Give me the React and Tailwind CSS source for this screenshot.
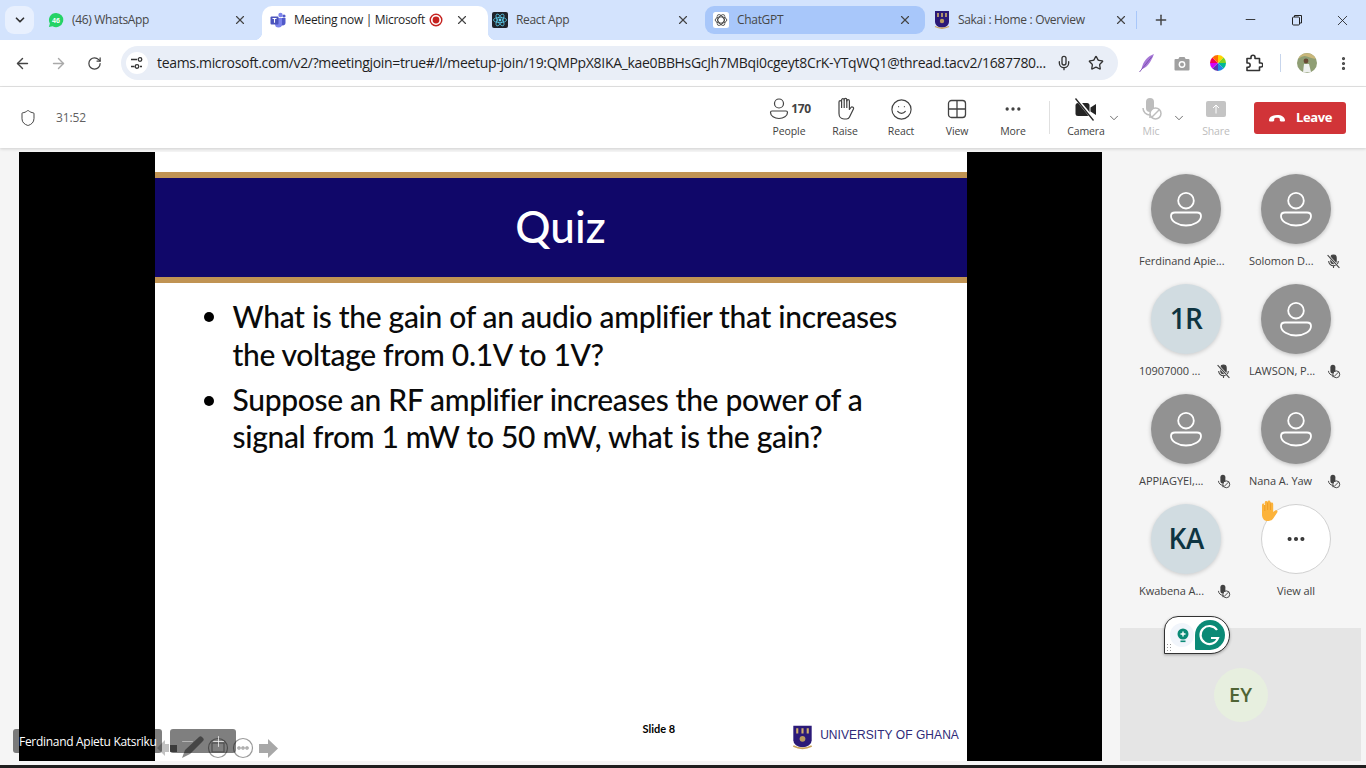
import {
  ArrowLeft, ArrowRight, RotateCw, Mic, Star, EllipsisVertical, X, Plus, Minus, ChevronDown, Shield, Smile, Ellipsis,
} from "lucide-react";

const ui = { fontFamily: '"Open Sans", "Noto Sans", sans-serif' };
const slideFont = { fontFamily: 'Lato, "Open Sans", sans-serif' };

const WhatsAppIcon = () => (
  <svg width="18" height="18" viewBox="0 0 18 18">
    <path d="M9 1a8 8 0 0 0-6.900 12L1 17l4.100-1.100A8 8 0 1 0 9 1z" fill="#25d366" />
    <text x="9" y="12" textAnchor="middle" fontSize="8" fontWeight="700" fill="#fff" fontFamily="Liberation Sans">46</text>
  </svg>
);

const TeamsIcon = () => (
  <svg width="16" height="16" viewBox="0 0 16 16">
    <circle cx="10.500" cy="3" r="2.200" fill="#7b83eb" />
    <circle cx="14" cy="4" r="1.600" fill="#5059c9" />
    <path d="M9 6h6.500v5a2.500 2.500 0 0 1-3.500 2.200A4 4 0 0 1 9 14z" fill="#5059c9" />
    <path d="M5 6h7v6a3.500 3.500 0 0 1-7 0z" fill="#7b83eb" />
    <rect x="0.500" y="4.500" width="8" height="8" rx="1" fill="#4b53bc" />
    <path d="M2.500 6.500h4M4.500 6.500v4.300" stroke="#fff" strokeWidth="1.100" />
  </svg>
);

const ReactIcon = () => (
  <svg width="16" height="16" viewBox="0 0 16 16">
    <rect width="16" height="16" rx="2" fill="#20232a" />
    <circle cx="8" cy="8" r="1.400" fill="#61dafb" />
    <g fill="none" stroke="#61dafb" strokeWidth="0.700">
      <ellipse cx="8" cy="8" rx="6.600" ry="2.600" />
      <ellipse cx="8" cy="8" rx="6.600" ry="2.600" transform="rotate(60 8 8)" />
      <ellipse cx="8" cy="8" rx="6.600" ry="2.600" transform="rotate(120 8 8)" />
    </g>
  </svg>
);

const ChatGptIcon = () => (
  <svg width="16" height="16" viewBox="0 0 16 16">
    <rect width="16" height="16" rx="2.500" fill="#fff" />
    <g fill="none" stroke="#444" strokeWidth="0.900">
      <ellipse cx="8" cy="8" rx="5.800" ry="3.100" />
      <ellipse cx="8" cy="8" rx="5.800" ry="3.100" transform="rotate(60 8 8)" />
      <ellipse cx="8" cy="8" rx="5.800" ry="3.100" transform="rotate(120 8 8)" />
    </g>
  </svg>
);

const GhanaShield = ({ w = 16, h = 18 }) => (
  <svg width={w} height={h} viewBox="0 0 16 18">
    <path d="M1 0h14v11a7 5.500 0 0 1-14 0z" fill="#2b1a78" />
    <path d="M4 2v4M8 2v4M12 2v4" stroke="#cfae6b" strokeWidth="1.600" />
    <circle cx="8" cy="10" r="2.200" fill="#b99a5f" />
    <path d="M1 15.500q7 3.500 14 0" stroke="#c9a35c" strokeWidth="1.300" fill="none" />
  </svg>
);

const RecordDot = () => (
  <svg width="14" height="14" viewBox="0 0 14 14" className="-ml-[4px] shrink-0">
    <circle cx="7" cy="7" r="5.800" fill="none" stroke="#c5221f" strokeWidth="1.400" />
    <circle cx="7" cy="7" r="3.400" fill="#c5221f" />
  </svg>
);

const Tab = ({ icon, title, width, paddingRight, active, hover, record, className = "" }) => (
  <div
    className={`relative flex h-7 shrink-0 items-center gap-[8px] pl-[8px] text-xs ${
      active ? "h-[34px] self-end rounded-t-[10px] bg-white pb-[6px] text-[#1f1f1f]" : "rounded-[9px] text-[#474747]"
    } ${hover ? "bg-[#a8c7fa]" : ""} ${className}`}
    style={{ width, paddingRight }}
  >
    {active && (
      <>
        <span className="absolute bottom-0 left-[-8px] h-[8px] w-[8px] bg-[radial-gradient(circle_at_0_0,transparent_8px,white_8.500px)]" />
        <span className="absolute bottom-0 right-[-8px] h-[8px] w-[8px] bg-[radial-gradient(circle_at_100%_0,transparent_8px,white_8.500px)]" />
      </>
    )}
    <span className="flex w-[16px] shrink-0 justify-center">{icon}</span>
    <span className="min-w-0 flex-1 whitespace-nowrap tracking-[-0.32px]">{title}</span>
    {record && <RecordDot />}
    <X size={14} strokeWidth={2} className="ml-[4px] shrink-0 text-[#444]" />
  </div>
);

const TabStrip = () => (
  <div className="flex h-10 shrink-0 items-start bg-[#d3e3fd] pl-[5px] pt-[6px]">
    <div className="flex h-7 w-[29px] shrink-0 items-center justify-center rounded-[9px] bg-[#e8f0fe]">
      <ChevronDown size={14} strokeWidth={3} className="text-[#333]" />
    </div>
    <Tab width={222} paddingRight={15} icon={<WhatsAppIcon />} title="(46) WhatsApp" className="ml-[6px]" />
    <Tab width={226} paddingRight={19} active icon={<TeamsIcon />} title="Meeting now | Microsoft" record />
    <Tab width={221} paddingRight={15} icon={<ReactIcon />} title="React App" className="-ml-[4px]" />
    <Tab width={220} paddingRight={13} hover icon={<ChatGptIcon />} title="ChatGPT" />
    <Tab width={210} paddingRight={8} icon={<GhanaShield />} title="Sakai : Home : Overview" className="ml-[1px]" />
    <div className="mt-[5px] h-[18px] w-px bg-[#a8c7fa]" />
    <Plus size={16} strokeWidth={2.200} className="ml-[16px] mt-[6px] text-[#444]" />
    <Minus size={15} strokeWidth={1.400} className="ml-[74px] mt-[6px] text-[#222]" />
    <svg width="12" height="12" viewBox="0 0 12 12" className="ml-[33px] mt-[8px]" fill="none" stroke="#222">
      <rect x="1.500" y="3" width="7" height="8" rx="1" />
      <path d="M3.500 3V1.500h7v7.500H8.500" />
    </svg>
    <X size={17} strokeWidth={1.200} className="ml-[31px] mt-[6px] text-[#222]" />
  </div>
);

const Feather = () => (
  <svg width="18" height="20" viewBox="0 0 18 20">
    <path d="M16 1C10 3 5 8 3.500 16c5-1 9-6 12.500-15z" fill="#a678d6" />
    <path d="M14 3.500 1.500 19" stroke="#7a4cb0" strokeWidth="0.900" />
  </svg>
);

const CameraGlyph = () => (
  <svg width="16" height="15" viewBox="0 0 16 15">
    <path d="M5.500 1h5l1.200 2H14.500a1 1 0 0 1 1 1v9.500a1 1 0 0 1-1 1h-13a1 1 0 0 1-1-1V4a1 1 0 0 1 1-1h2.800z" fill="#a0a0a0" />
    <circle cx="8" cy="8.500" r="3.400" fill="#fff" />
    <circle cx="8" cy="8.500" r="2" fill="#a0a0a0" />
  </svg>
);

const ColorWheel = () => (
  <svg width="16" height="16" viewBox="0 0 16 16">
    <path d="M8 8V0a8 8 0 0 1 5.700 2.400z" fill="#ffd400" />
    <path d="M8 8l5.700-5.600A8 8 0 0 1 16 8z" fill="#7ed321" />
    <path d="M8 8h8a8 8 0 0 1-2.300 5.600z" fill="#00b894" />
    <path d="M8 8l5.700 5.600A8 8 0 0 1 8 16z" fill="#1e88e5" />
    <path d="M8 8v8a8 8 0 0 1-5.700-2.400z" fill="#5e35b1" />
    <path d="M8 8l-5.700 5.600A8 8 0 0 1 0 8z" fill="#d500f9" />
    <path d="M8 8H0a8 8 0 0 1 2.300-5.600z" fill="#f50057" />
    <path d="M8 8 2.300 2.400A8 8 0 0 1 8 0z" fill="#ff6d00" />
  </svg>
);

const PuzzleGlyph = () => (
  <svg width="18" height="18" viewBox="0 0 18 18" fill="none" stroke="#333" strokeWidth="1.600" strokeLinejoin="round">
    <path d="M2 4.500h4V3.200a2 2 0 0 1 4 0v1.300h4.500V9h1.300a2 2 0 0 1 0 4h-1.300v3.500H2v-3.200h1a2 2 0 0 0 0-4.300H2z" />
  </svg>
);

const Profile = () => (
  <svg width="20" height="20" viewBox="0 0 20 20">
    <circle cx="10" cy="10" r="10" fill="#8f9e74" />
    <path d="M1 6q5-4 9-2.500t9 2.500a10 10 0 0 0-18 0z" fill="#c9b77a" />
    <circle cx="9" cy="8" r="2.400" fill="#6a4a35" />
    <path d="M6 19.500l1-8.500h5l2 8z" fill="#eef0ee" />
  </svg>
);

const TuneIcon = () => (
  <svg width="14" height="14" viewBox="0 0 14 14" fill="none" stroke="#333" strokeWidth="1.300">
    <path d="M1 3.500h6M1 10.500h3.500" />
    <circle cx="10" cy="3.500" r="1.800" />
    <circle cx="7" cy="10.500" r="1.800" />
    <path d="M12 10.500h-2" />
  </svg>
);

const AddressBar = () => (
  <div className="flex h-[47px] shrink-0 items-center border-b border-[#e3e3e3] bg-white pl-[14px]">
    <ArrowLeft size={17} strokeWidth={2} className="text-[#444]" />
    <ArrowRight size={17} strokeWidth={2} className="ml-[19px] text-[#a9a9a9]" />
    <RotateCw size={15} strokeWidth={2} className="ml-[20px] text-[#444]" />
    <div className="ml-[19px] flex h-[34px] w-[997px] items-center rounded-full bg-[#e9eef7] pl-[5px]">
      <div className="flex h-[22px] w-[22px] shrink-0 items-center justify-center rounded-full bg-white">
        <TuneIcon />
      </div>
      <span className="ml-[9px] w-[899px] shrink-0 whitespace-nowrap text-sm tracking-[-0.325px] text-[#1f1f1f]">
        teams.microsoft.com/v2/?meetingjoin=true#/l/meetup-join/19:QMPpX8IKA_kae0BBHsGcJh7MBqi0cgeyt8CrK-YTqWQ1@thread.tacv2/1687780...
      </span>
      <Mic size={16} strokeWidth={2} className="shrink-0 text-[#333]" />
      <Star size={16} strokeWidth={2} className="ml-[16px] shrink-0 text-[#333]" />
    </div>
    <span className="ml-[20px]"><Feather /></span>
    <span className="ml-[18px]"><CameraGlyph /></span>
    <span className="ml-[20px]"><ColorWheel /></span>
    <span className="ml-[19px]"><PuzzleGlyph /></span>
    <div className="ml-[17px] h-[18px] w-px bg-[#c7d5ec]" />
    <span className="ml-[16px]"><Profile /></span>
    <EllipsisVertical size={17} strokeWidth={2.500} className="ml-[18px] text-[#444]" />
  </div>
);

const PersonGlyph = () => (
  <svg width="24" height="24" viewBox="0 0 24 24" fill="none" stroke="#424242" strokeWidth="1.200">
    <circle cx="12" cy="6.500" r="4.500" />
    <path d="M5 14h14a1.500 1.500 0 0 1 1.500 1.500c0 3.500-4 6-8.500 6s-8.500-2.500-8.500-6A1.500 1.500 0 0 1 5 14z" />
  </svg>
);

const HandGlyph = () => (
  <svg width="20" height="24" viewBox="0 0 20 24" fill="none" stroke="#424242" strokeWidth="1.200" strokeLinejoin="round">
    <path d="M4 12V5a1.300 1.300 0 0 1 2.600 0V3a1.300 1.300 0 0 1 2.600 0v-.3a1.300 1.300 0 0 1 2.600 0V4a1.300 1.300 0 0 1 2.600 0v8.500l1.500-2a1.500 1.500 0 0 1 2.400 1.800L14.500 20a3.500 3.500 0 0 1-3 2H9c-3 0-5-2.500-5-5.500z" />
    <path d="M6.600 5v6M9.200 3v8M11.800 3v8" />
  </svg>
);

const GridGlyph = () => (
  <svg width="22" height="22" viewBox="0 0 22 22" fill="none" stroke="#424242" strokeWidth="1.300">
    <rect x="2.500" y="2.500" width="17" height="17" rx="3" />
    <path d="M11 2.500v17M2.500 11h17" />
  </svg>
);

const CameraOff = () => (
  <svg width="24" height="24" viewBox="0 0 24 24">
    <rect x="1.500" y="6" width="14" height="13" rx="2.500" fill="#242424" />
    <path d="M16.500 10.500 22 7v11l-5.500-3.500z" fill="#242424" />
    <path d="M2 1l18 22" stroke="#fff" strokeWidth="3" />
    <path d="M1.500 1.500l18 22" stroke="#242424" strokeWidth="1.300" />
  </svg>
);

const MicOffFilled = ({ size = 24, color = "#bdbdbd", badge = "#fff" }) => (
  <svg width={size} height={size} viewBox="0 0 24 24" fill="none">
    <rect x="7" y="1" width="8" height="14" rx="4" fill={color} />
    <path d="M4 11a7 7 0 0 0 7 7v3" stroke={color} strokeWidth="1.500" />
    <circle cx="16.500" cy="16.500" r="5.500" fill={badge} stroke={color} strokeWidth="1.500" />
    <path d="M13 20l7-7" stroke={color} strokeWidth="1.500" />
  </svg>
);

const ToolButton = ({ label, width, muted, className = "", children }) => (
  <div className={`flex shrink-0 flex-col items-center ${className}`} style={{ width }}>
    <div className="flex h-[24px] items-center">{children}</div>
    <span className={`mt-[3px] text-[10.500px] leading-[14px] tracking-[-0.1px] ${muted ? "text-[#bdbdbd]" : "text-[#424242]"}`}>{label}</span>
  </div>
);

const MeetingBar = () => (
  <div className="z-10 flex h-[61px] shrink-0 items-center bg-white pl-[19px] pr-[20px] shadow-[0_1px_3px_rgba(0,0,0,0.16)]">
    <Shield size={18} strokeWidth={1.300} className="text-[#424242]" />
    <span className="ml-[19px] text-xs tracking-[-0.1px] text-[#616161]">31:52</span>
    <div className="ml-auto flex items-center">
      <ToolButton label="People" width={56}>
        <PersonGlyph />
        <span className="text-xs font-bold tracking-[-0.3px] text-[#424242]">170</span>
      </ToolButton>
      <ToolButton label="Raise" width={56}><HandGlyph /></ToolButton>
      <ToolButton label="React" width={56}><Smile size={23} strokeWidth={1.200} className="text-[#424242]" /></ToolButton>
      <ToolButton label="View" width={56}><GridGlyph /></ToolButton>
      <ToolButton label="More" width={56}><Ellipsis size={20} strokeWidth={2} className="text-[#424242]" /></ToolButton>
      <div className="ml-[8px] mr-[16px] h-[33px] w-px bg-[#e0e0e0]" />
      <ToolButton label="Camera" width={40}><CameraOff /></ToolButton>
      <ChevronDown size={14} strokeWidth={1.300} className="ml-[1px] text-[#424242]" />
      <ToolButton label="Mic" width={30} muted className="ml-[15px]"><MicOffFilled /></ToolButton>
      <ChevronDown size={14} strokeWidth={1.300} className="ml-[6px] text-[#424242]" />
      <ToolButton label="Share" width={30} muted className="ml-[15px]">
        <div className="flex h-[16px] w-[20px] items-center justify-center rounded-[2px] bg-[#c4c4c4]">
          <svg width="10" height="10" viewBox="0 0 10 10" fill="none" stroke="#fff" strokeWidth="1">
            <path d="M5 9.500v-8M2 4l3-3 3 3" />
          </svg>
        </div>
      </ToolButton>
      <div className="ml-[23px] flex h-[32px] w-[92px] items-center justify-center gap-[10px] rounded-[3px] bg-[#d13438] text-[13px] font-bold tracking-[-0.4px] text-white">
        <svg width="18" height="8" viewBox="0 0 18 8"><path d="M1 6.500C1 3 4.500 1 9 1s8 2 8 5.500c0 .8-.7 1-1.500 1H13c-.8 0-1.200-.5-1.200-1.200V5c0-.7-1.300-1.200-2.800-1.200S6.200 4.300 6.200 5v1.300c0 .7-.4 1.200-1.200 1.200H2.500C1.700 7.500 1 7.300 1 6.500z" fill="#fff" /></svg>
        Leave
      </div>
    </div>
  </div>
);

const Bullet = ({ lines, className = "", leading = "leading-[38px]" }) => (
  <div className={`flex text-[#0a0a0a] ${className}`}>
    <span className="mt-[15px] h-[10px] w-[10px] shrink-0 rounded-full bg-black" />
    <div className={`ml-[19px] text-[30px] font-medium tracking-[-0.33px] ${leading}`}>
      {lines.map((line) => (
        <div key={line} className="whitespace-nowrap">{line}</div>
      ))}
    </div>
  </div>
);

const Slide = () => (
  <div className="flex w-[812px] shrink-0 flex-col bg-white" style={slideFont}>
    <div className="mt-[20px] flex h-[111px] items-center justify-center border-y-[6px] border-[#c09353] bg-[#100769] pb-[4px] text-[44px] font-medium text-white">
      Quiz
    </div>
    <div className="pl-[49px] pt-[14px]">
      <Bullet lines={["What is the gain of an audio amplifier that increases", "the voltage from 0.1V to 1V?"]} />
      <Bullet className="mt-[8px]" leading="leading-[37px]" lines={["Suppose an RF amplifier increases the power of a", "signal from 1 mW to 50 mW, what is the gain?"]} />
    </div>
    <div className="mt-auto flex items-start pb-[11px] pl-[488px] pr-[7px]">
      <span className="mt-[-3px] text-[11px] font-bold leading-[14px] text-black">Slide 8</span>
      <span className="ml-[117px] flex items-center">
        <GhanaShield w={21} h={25} />
        <span className="mb-[5px] ml-[7px] whitespace-nowrap text-[12px] font-medium leading-[14px] tracking-[0.05px] text-[#2e2a78]" style={{ fontFamily: '"Liberation Sans", sans-serif' }}>UNIVERSITY OF GHANA</span>
      </span>
    </div>
  </div>
);

const SlideControls = () => (
  <svg width="125" height="30" viewBox="0 0 125 30" fill="#a8a8a8" className="absolute left-[138px] top-[578px]">
    <path d="M0 18l8-8v4h4v8H8v4z" opacity="0.7" />
    <rect x="13" y="15" width="7" height="7" fill="#777" />
    <path d="M25 28l3-8L42 7c1-1 2-1 3 0l1 1c1 1 1 2 0 3L33 24z" fill="#8a8a8a" />
    <g fill="none" stroke="#9a9a9a" strokeWidth="1.200">
      <circle cx="61" cy="18" r="9.500" />
      <rect x="55" y="13" width="12" height="9" />
      <circle cx="86" cy="18" r="9.500" />
      <circle cx="82" cy="18" r="1.200" />
      <circle cx="86" cy="18" r="1.200" />
      <circle cx="90" cy="18" r="1.200" />
    </g>
    <path d="M102 14h9V9l10 9.500L111 28v-5h-9z" />
  </svg>
);

const Stage = () => (
  <div className="relative flex w-[1083px] shrink-0 justify-center bg-black">
    <Slide />
    <SlideControls />
    <div className="absolute left-[-6px] top-[577px] flex h-[24px] w-[149px] items-center whitespace-nowrap rounded-[3px] bg-black/50 pl-[6px] pt-[1px] text-xs tracking-[-0.3px] text-white">
      Ferdinand Apietu Katsriku
    </div>
    <div className="absolute left-[151px] top-[577px] flex h-[24px] w-[66px] items-center justify-between rounded-[3px] bg-black/50 pl-[9px] pr-[9px] text-white">
      <Minus size={17} strokeWidth={1} className="opacity-60" />
      <Plus size={17} strokeWidth={1} />
    </div>
  </div>
);

const MicBlocked = () => <MicOffFilled size={15} color="#424242" badge="#f5f5f5" />;

const MicMuted = () => (
  <svg width="15" height="15" viewBox="0 0 14 14" fill="none" stroke="#424242">
    <rect x="4.500" y="1" width="5" height="8" rx="2.500" fill="#424242" />
    <path d="M2.500 6.500a4.500 4.500 0 0 0 9 0M7 11v2" strokeWidth="1" />
    <path d="M1.500 1l11 12" stroke="#f5f5f5" strokeWidth="2.200" />
    <path d="M1.500 1l11 12" strokeWidth="1" />
  </svg>
);

const AvatarGlyph = () => (
  <svg width="70" height="70" viewBox="0 0 70 70" fill="none" stroke="#fff" strokeWidth="1.800">
    <circle cx="35" cy="26.700" r="7.800" />
    <path d="M24 38.500h22c2.500 0 4 1.500 4 3.500 0 5.500-7 9.500-15 9.500S20 47.500 20 42c0-2 1.500-3.500 4-3.500z" />
  </svg>
);

const Participant = ({ name, initials, mic }) => (
  <div className="flex h-[110px] flex-col items-center">
    {initials ? (
      <div className="flex h-[70px] w-[70px] items-center justify-center rounded-full bg-[#d1dce1] pb-[2px] text-[28px] font-semibold tracking-[-0.8px] text-[#0e3441] shadow-[0_1px_4px_rgba(0,0,0,0.18)]">
        {initials}
      </div>
    ) : (
      <div className="h-[70px] w-[70px] rounded-full bg-[#929292] shadow-[0_1px_4px_rgba(0,0,0,0.25)]">
        <AvatarGlyph />
      </div>
    )}
    <div className="mt-[9px] flex h-[16px] w-[94px] items-center justify-between pr-[2px] text-[11px] tracking-[-0.05px] text-[#424242]">
      <span className="whitespace-nowrap">{name}</span>
      {mic === "muted" && <MicMuted />}
      {mic === "blocked" && <MicBlocked />}
    </div>
  </div>
);

const RaisedHand = () => (
  <svg width="24" height="24" viewBox="0 0 24 24" className="absolute left-[-6px] top-[-6px]">
    <path d="M6 13V6a1.400 1.400 0 0 1 2.800 0V3.500a1.400 1.400 0 0 1 2.800 0V3a1.400 1.400 0 0 1 2.800 0v2a1.400 1.400 0 0 1 2.800 0v8l2-1.500c1.500-1 3 .5 2 2l-4 6c-1 1.500-2.500 2.500-4.500 2.500h-2C8.500 22 6 19 6 16z" fill="#fcb33b" />
    <path d="M8.800 6v6M11.600 3.500V11M14.400 3v8" stroke="#e08a12" strokeWidth="0.500" />
  </svg>
);

const ViewAll = () => (
  <div className="flex h-[110px] flex-col items-center">
    <div className="relative flex h-[70px] w-[70px] items-center justify-center rounded-full border border-[#d1d1d1] bg-white">
      <RaisedHand />
      <Ellipsis size={22} strokeWidth={2.500} className="text-[#333]" />
    </div>
    <span className="mt-[9px] text-[11px] leading-[16px] tracking-[-0.05px] text-[#424242]">View all</span>
  </div>
);

const GrammarlyWidget = () => (
  <div className="absolute left-[62px] top-[464px] flex h-[38px] w-[66px] items-center rounded-[14px_19px_19px_0] border border-[#333] bg-white pl-[5px] shadow-[0_1px_3px_rgba(0,0,0,0.3)]">
    <svg width="24" height="24" viewBox="0 0 24 24">
      <circle cx="12" cy="12" r="12" fill="#f1f5fb" />
      <circle cx="13" cy="11" r="5.500" fill="#0b8a76" />
      <path d="M13 8.500v5M10.500 11h5" stroke="#fff" strokeWidth="1.400" />
      <rect x="10.500" y="17.500" width="5" height="1.600" fill="#0b8a76" />
    </svg>
    <svg width="30" height="30" viewBox="0 0 30 30" className="ml-[1px]">
      <path d="M15 0a15 15 0 0 1 0 30H1a1 1 0 0 1-1-1V15A15 15 0 0 1 15 0z" fill="#0b8a76" />
      <path d="M22 10a9 9 0 1 0 1 8h-7" fill="none" stroke="#fff" strokeWidth="2.200" />
    </svg>
    <svg width="5" height="7" viewBox="0 0 5 7" fill="#999" className="absolute bottom-[2px] left-[2px]">
      <path d="M0 0h1v1H0zM3 0h1v1H3zM0 3h1v1H0zM3 3h1v1H3zM0 6h1v1H0zM3 6h1v1H3z" />
    </svg>
  </div>
);

const participants = [
  { name: "Ferdinand Apie..." },
  { name: "Solomon D...", mic: "muted" },
  { name: "10907000 ...", initials: "1R", mic: "muted" },
  { name: "LAWSON, P...", mic: "blocked" },
  { name: "APPIAGYEI,...", mic: "blocked" },
  { name: "Nana A. Yaw", mic: "blocked" },
  { name: "Kwabena A...", initials: "KA", mic: "blocked" },
];

const SidePanel = () => (
  <div className="relative flex min-w-0 flex-1 flex-col">
    <div className="grid grid-cols-[110px_110px] pl-[29px] pt-[22px]">
      {participants.map((p) => (
        <Participant key={p.name} {...p} />
      ))}
      <ViewAll />
    </div>
    <div className="ml-[18px] mr-[5px] mt-auto flex h-[133px] items-center justify-center bg-[#e5e5e5]">
      <div className="flex h-[54px] w-[54px] items-center justify-center rounded-full bg-[#e7efdf] text-xl font-semibold text-[#4f6435]">EY</div>
    </div>
    <GrammarlyWidget />
  </div>
);

export default function App() {
  return (
    <div className="flex h-[768px] w-[1366px] flex-col overflow-hidden bg-[#f5f5f5]" style={ui}>
      <TabStrip />
      <AddressBar />
      <MeetingBar />
      <div className="flex min-h-0 flex-1 py-[4px] pl-[19px]">
        <Stage />
        <SidePanel />
      </div>
      <div className="h-[3px] shrink-0 bg-[#1f1f1f]" />
    </div>
  );
}
